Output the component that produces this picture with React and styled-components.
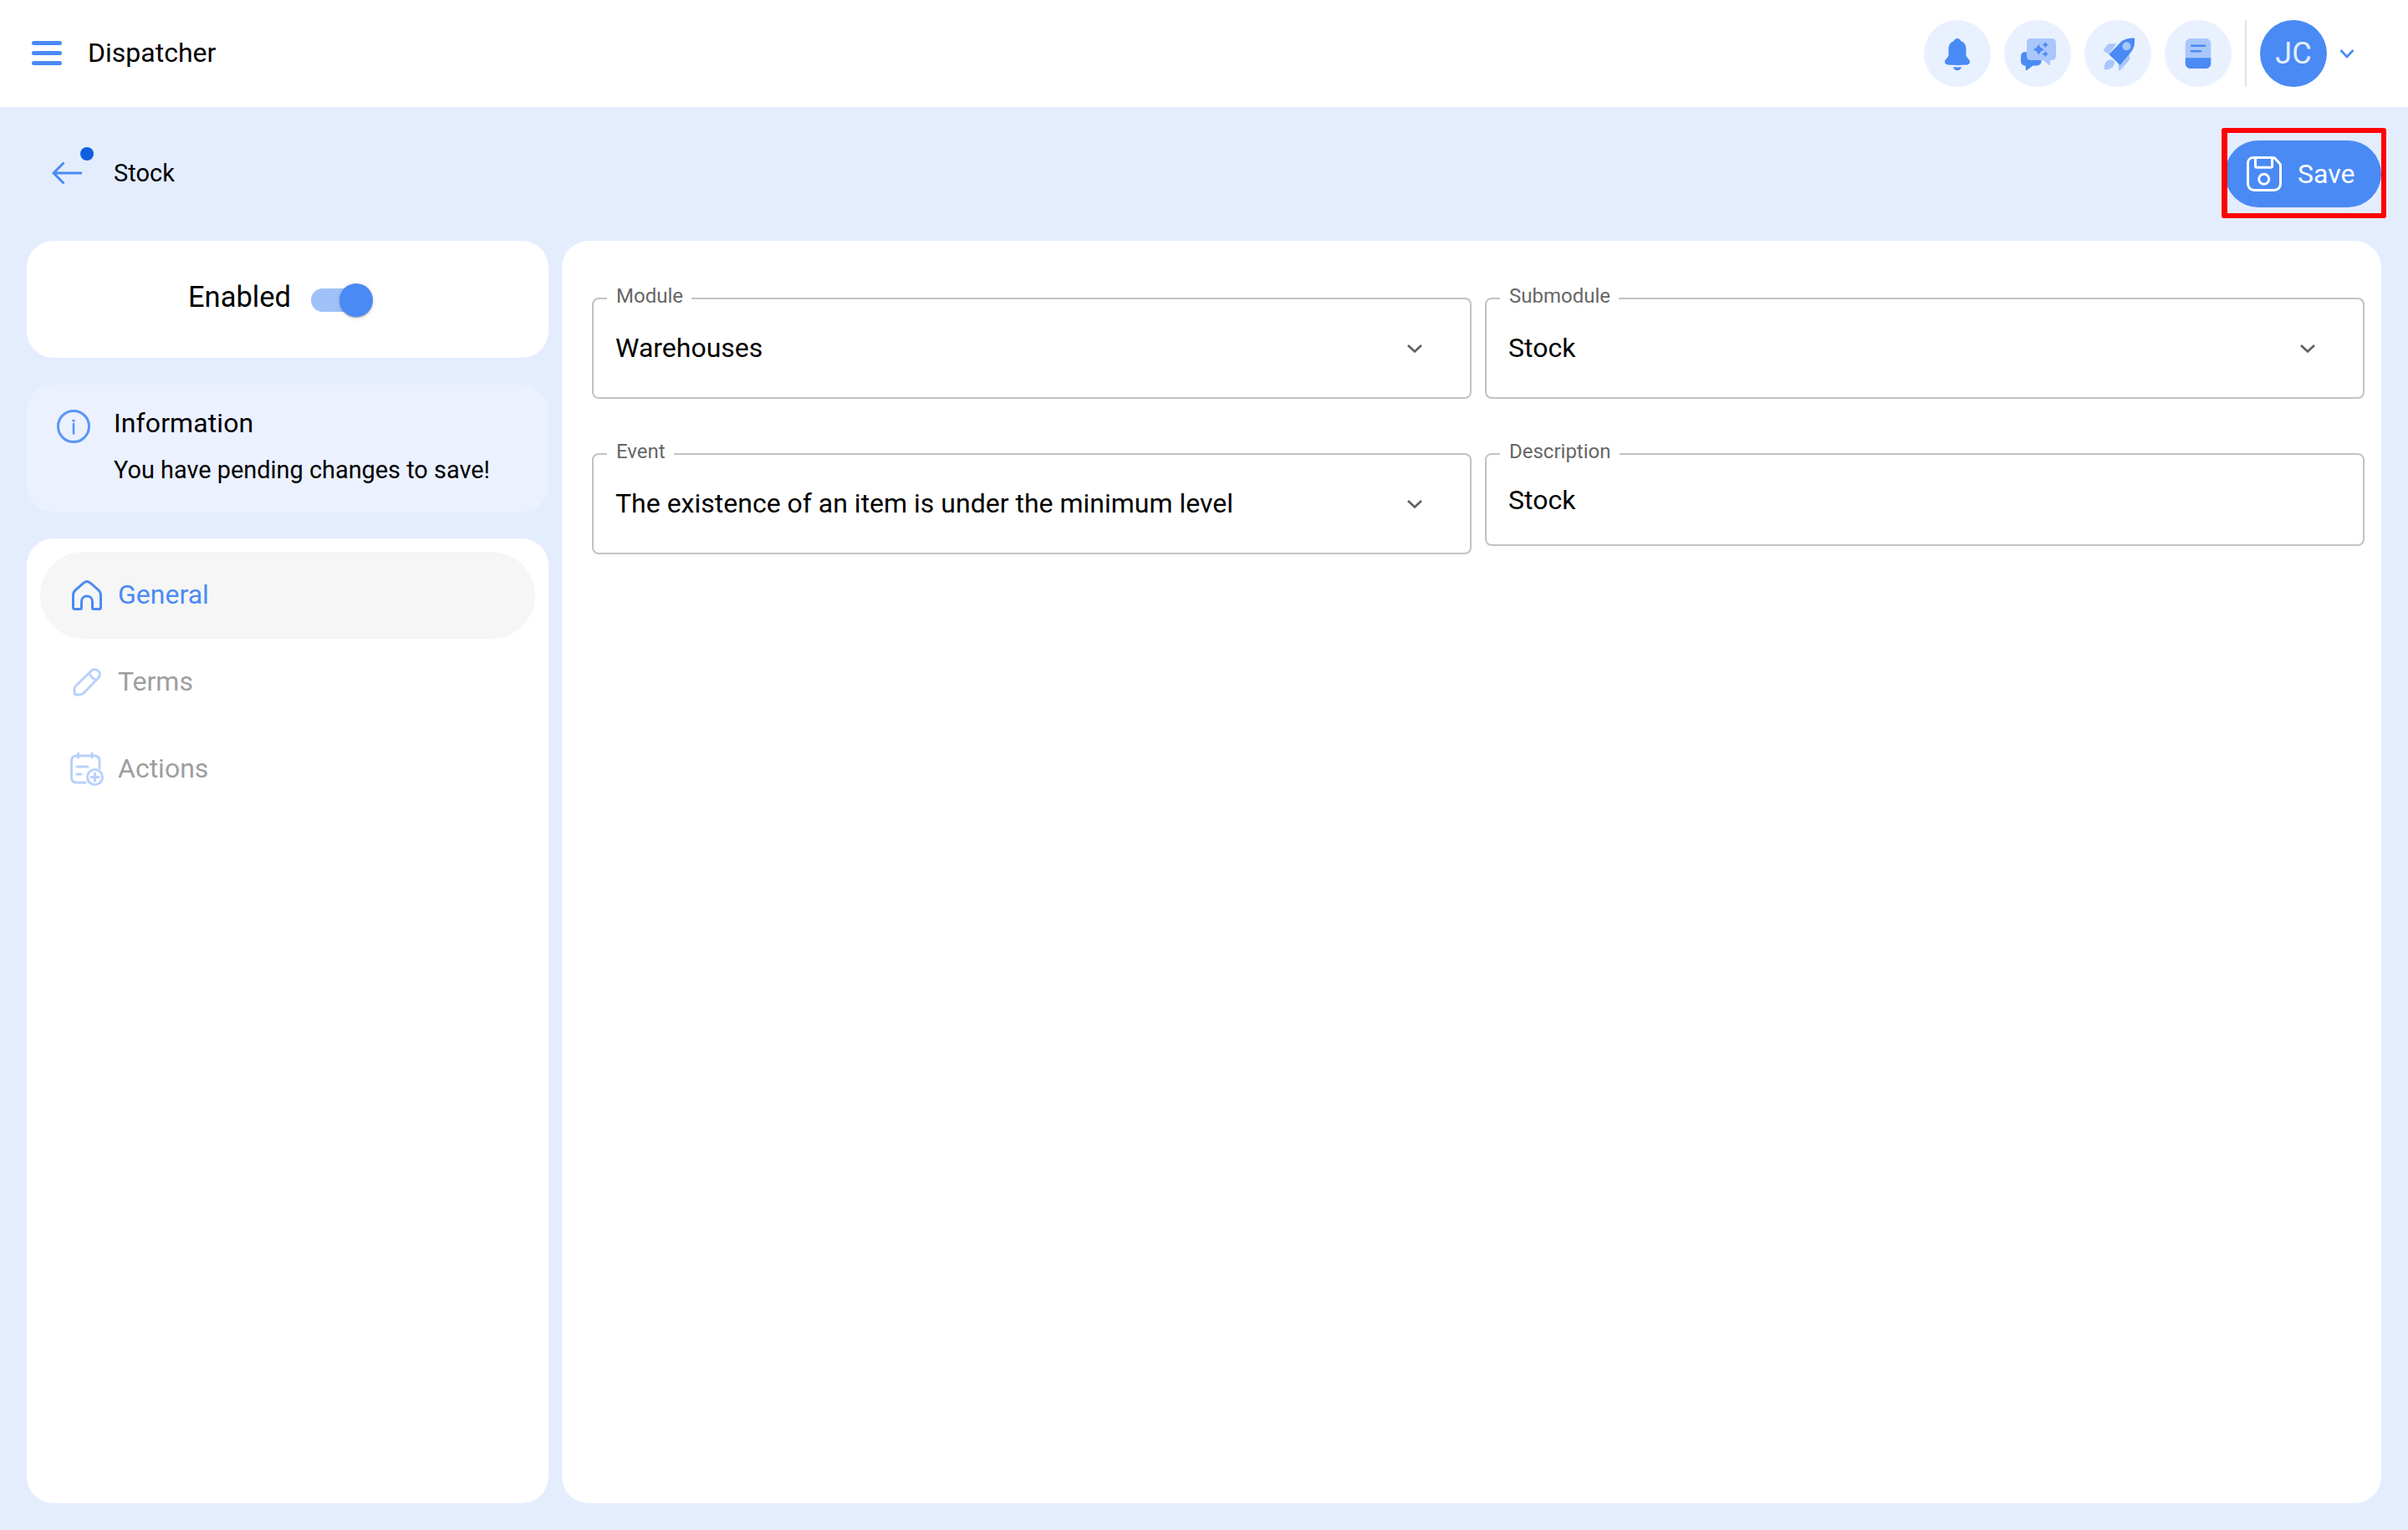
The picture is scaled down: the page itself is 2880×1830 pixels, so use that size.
import React from "react";
import styled, { createGlobalStyle } from "styled-components";

const blue = "#4a8af4";
const light = "#a9c7fb";
const pale = "#b8d1fb";
const Global = createGlobalStyle`
  html, body { margin: 0; padding: 0; background: #e3edfe; }
  body { font-family: Roboto, "Liberation Sans", sans-serif; color: #000; }
  * { box-sizing: border-box; }
`;
const Page = styled.div`
  width: 2880px; height: 1830px; display: flex; flex-direction: column; background: #e3edfe; overflow: hidden;
`;
const Header = styled.header`
  height: 128px; flex: none; background: #fff; display: flex; align-items: center; padding: 0 64px 0 38px;
`;
const Brand = styled.div`
  font-size: 32px; margin-left: 31px; flex: 1; line-height: 1; margin-top: -2px;
`;
const Toolbar = styled.div` display: flex; align-items: center; gap: 16px; `;
const RoundIcon = styled.div`
  width: 80px; height: 80px; border-radius: 50%; background: #eaf1fe; display: flex;
`;
const Divider = styled.div` width: 2px; height: 80px; background: #e2e2e2; `;
const Avatar = styled.div`
  width: 80px; height: 80px; border-radius: 50%; background: ${blue}; color: #e4edfe;
  display: flex; align-items: center; justify-content: center; font-size: 36px;
`;
const Chevron = styled.svg` width: 18px; height: 12px; margin-left: 15px; `;
const SubBar = styled.div`
  height: 160px; flex: none; display: flex; align-items: center; justify-content: space-between; padding: 0 32px 0 62px;
`;
const Back = styled.div` position: relative; display: flex; align-items: center; margin-top: -2px; `;
const Dot = styled.span`
  position: absolute; left: 34px; top: -15px; width: 16px; height: 16px; border-radius: 50%; background: #0f5fdf;
`;
const BackLabel = styled.div` font-size: 29px; margin-left: 37px; margin-top: -1px; `;
const SaveButton = styled.button`
  position: relative; width: 187px; height: 80px; border: 0; border-radius: 40px; background: ${blue}; color: #fff;
  display: flex; align-items: center; padding: 0 0 0 26px; font: 400 32px Roboto, sans-serif;
`;
const SaveLabel = styled.span` margin-left: 19px; margin-top: -1px; `;
const Highlight = styled.span`
  position: absolute; left: -4px; right: -6px; top: -15px; bottom: -13px; border: 6px solid #ff0000; border-left-width: 7px; border-radius: 3px;
`;
const Main = styled.main`
  flex: 1; min-height: 0; display: flex; gap: 16px; padding: 0 32px 32px;
`;
const Side = styled.aside`
  width: 624px; flex: none; display: flex; flex-direction: column; gap: 32px;
`;
const Card = styled.section`
  background: ${(p) => p.$bg || "#fff"}; border-radius: 32px;
`;
const EnabledCard = styled(Card)`
  height: 140px; display: flex; align-items: center; justify-content: center; gap: 24px; padding-right: 23px;
`;
const EnabledLabel = styled.span` font-size: 34.5px; margin-top: -7px; `;
const Switch = styled.span` position: relative; display: block; width: 68px; height: 28px; border-radius: 14px; background: #a1c2f9; margin-top: 2px; `;
const Thumb = styled.span`
  position: absolute; left: 34px; top: -6px; width: 40px; height: 40px; border-radius: 50%; background: ${blue};
  box-shadow: 0 2px 2px -1px rgba(0,0,0,.2), 0 1px 2px rgba(0,0,0,.14), 0 1px 6px rgba(0,0,0,.12);
`;
const InfoCard = styled(Card)`
  height: 152px; display: flex; padding: 28px 0 0 36px; gap: 28px;
`;
const InfoGlyph = styled.svg` width: 40px; height: 40px; flex: none; margin-top: 2px; `;
const InfoText = styled.div` display: flex; flex-direction: column; `;
const InfoTitle = styled.div` font-size: 32px; line-height: 36px; letter-spacing: 0.1px; `;
const InfoBody = styled.div` font-size: 28.9px; line-height: 36px; margin-top: 20px; `;
const NavCard = styled(Card)` flex: 1; padding: 16px; display: flex; flex-direction: column; `;
const NavItem = styled.div`
  height: 104px; border-radius: 52px; display: flex; align-items: center; padding-left: 36px; gap: 17px;
  background: ${(p) => (p.$active ? "#f6f6f6" : "transparent")};
  color: ${(p) => (p.$active ? blue : "#9e9e9e")}; font-size: 32px;
`;
const NavLabel = styled.span` margin-top: -3px; `;
const NavIcon = styled.svg` width: 40px; height: 40px; flex: none; `;
const Panel = styled(Card)`
  flex: 1; display: grid; grid-template-columns: 1fr 1fr; column-gap: 16px; row-gap: 65px; align-content: start;
  align-items: start; padding: 68px 20px 0 36px;
`;
const Field = styled.div`
  position: relative; height: ${(p) => p.$h}px; border: 2px solid #c2c2c2; border-radius: 8px; display: flex;
  align-items: ${(p) => (p.$top ? "flex-start" : "center")}; padding: ${(p) => (p.$top ? "37px" : "0")} 26px 0 26px; font-size: 32px;
`;
const FieldLabel = styled.label`
  position: absolute; left: 16px; top: -18px; padding: 0 10px 0 11px; background: #fff; font-size: 24px; line-height: 28px; color: #666;
`;
const FieldValue = styled.span` flex: 1; margin-top: -2px; `;
const Caret = styled.svg` width: 18px; height: 10px; margin-right: 31px; `;

const Bell = () => (
  <svg width="80" height="80" viewBox="0 0 80 80">
    <path fill={blue} d="M40 22c-2 0-3.400 1-4.200 3C31.500 26.500 29.500 30 29.500 35v6.500c0 3.500-4.500 5-4.500 8.800 0 2.200 2 3 4 3.200 7 .6 15 .6 22 0 2-.2 4-1 4-3.200 0-3.800-4.500-5.300-4.500-8.800V35c0-5-2-8.500-6.300-10-.8-2-2.200-3-4.200-3z" />
    <path fill={blue} d="M35 56c3.300.5 6.700.5 10 0-.8 2.800-2.600 4.200-5 4.200s-4.200-1.400-5-4.200z" />
  </svg>
);
const Star = ({ x, y, r, c }) => (
  <path fill={c} d={`M${x} ${y - r}Q${x + r * 0.2} ${y - r * 0.2} ${x + r} ${y}Q${x + r * 0.2} ${y + r * 0.2} ${x} ${y + r}Q${x - r * 0.2} ${y + r * 0.2} ${x - r} ${y}Q${x - r * 0.2} ${y - r * 0.2} ${x} ${y - r}z`} />
);
const Chat = () => (
  <svg width="80" height="80" viewBox="0 0 80 80">
    <path fill={blue} d="M25 38.500h14c3 0 5.500 2.500 5.500 5.500v5c0 3-2.500 5.500-5.500 5.500h-4.500L27 60c-.6.400-1.300 0-1.300-.7v-4.800H25c-3 0-5-2.500-5-5.500v-5.500c0-3 2-5.500 5-5.500z" />
    <path fill={light} d="M32 22h25c3 0 5 2 5 5v16c0 3-2 5-5 5h-2v5c0 1-.8 1.400-1.500.8L47 48H32c-3 0-5-2-5-5V27c0-3 2-5 5-5z" />
    <Star x={41.300} y={35.300} r={7} c={blue} />
    <Star x={49.300} y={29.700} r={3.600} c={blue} />
    <Star x={49.300} y={40.700} r={3.600} c={blue} />
  </svg>
);
const Rocket = () => (
  <svg width="80" height="80" viewBox="0 0 80 80">
    <path fill={light} d="M22.300 36.500l5.500-7.500c.5-.6 1-.8 1.800-.8h9L29 41z" />
    <path fill={light} d="M41 60l-.4-9.500L54 38v8.500c0 .7-.2 1.200-.7 1.800L43 60c-.7.700-1.800.6-2 0z" />
    <path fill={light} d="M24 59c-1-3.500.5-8.500 3.500-10.500 2.500-1.500 6.500-1 8 .5 1.300 1.500.5 5-1.500 7-2.500 2.500-6.500 3.500-10 3z" />
    <path fill={blue} d="M29.300 41L44 25.800C48 22.500 54 21.500 60 21.500c.5 6-.5 11.500-3.500 15.700L42.700 54z" />
    <circle cx="50.400" cy="31.300" r="5" fill={light} />
  </svg>
);
const Book = () => (
  <svg width="80" height="80" viewBox="0 0 80 80">
    <path fill={light} d="M30.700 22h18.600c3.300 0 6 2.700 6 6v18H24.700V28c0-3.300 2.700-6 6-6z" />
    <path fill={blue} d="M24.700 45.300h30.600V52c0 3.300-2.700 6-6 6H30.700c-3.300 0-6-2.700-6-6z" />
    <path stroke={blue} strokeWidth="2.600" strokeLinecap="round" fill="none" d="M32 30.800h16M32 37.300h11" />
  </svg>
);

const ChevronIcon = () => (
  <Chevron viewBox="0 0 18 12"><path d="M1.500 2l7.500 8 7.500-8" fill="none" stroke={blue} strokeWidth="2.600" /></Chevron>
);
const CaretIcon = () => (
  <Caret viewBox="0 0 18 10"><path d="M1 1l8 7.500L17 1" fill="none" stroke="#5f5f5f" strokeWidth="2.600" /></Caret>
);
const Select = ({ label, value, h = 121 }) => (
  <Field $h={h}>
    <FieldLabel>{label}</FieldLabel>
    <FieldValue>{value}</FieldValue>
    <CaretIcon />
  </Field>
);

export default function App() {
  return (
    <Page>
      <Global />
      <Header>
        <svg width="36" height="30" viewBox="0 0 36 30"><path d="M2.500 2.500h31M2.500 14.500h31M2.500 26.500h31" stroke={blue} strokeWidth="5" strokeLinecap="round" /></svg>
        <Brand>Dispatcher</Brand>
        <Toolbar>
          <RoundIcon><Bell /></RoundIcon>
          <RoundIcon><Chat /></RoundIcon>
          <RoundIcon><Rocket /></RoundIcon>
          <RoundIcon><Book /></RoundIcon>
          <Divider />
          <Avatar>JC</Avatar>
        </Toolbar>
        <ChevronIcon />
      </Header>
      <SubBar>
        <Back>
          <svg width="37" height="28" viewBox="0 0 37 28"><path d="M36 14H2M14.500 1.500L2 14l12.500 12.500" fill="none" stroke={blue} strokeWidth="3" /></svg>
          <Dot />
          <BackLabel>Stock</BackLabel>
        </Back>
        <SaveButton>
          <svg width="42" height="42" viewBox="0 0 42 42" fill="none" stroke="#fff" strokeWidth="3">
            <path d="M8 1.500h23.500c1 0 1.800.4 2.500 1l5.500 6c.7.700 1 1.500 1 2.500V33c0 4-3 7.500-7.500 7.500H9C4.500 40.500 1.500 37 1.500 33V8c0-4 3-6.500 6.500-6.500z" strokeLinejoin="round" />
            <path d="M10.500 2v10c0 .8.500 1.300 1.500 1.300h17c1 0 1.500-.5 1.500-1.300V2" />
            <circle cx="20.700" cy="27.300" r="6" />
          </svg>
          <SaveLabel>Save</SaveLabel>
          <Highlight />
        </SaveButton>
      </SubBar>
      <Main>
        <Side>
          <EnabledCard>
            <EnabledLabel>Enabled</EnabledLabel>
            <Switch><Thumb /></Switch>
          </EnabledCard>
          <InfoCard $bg="#ebf1fe">
            <InfoGlyph viewBox="0 0 40 40" fill="none" stroke="#5b96f6" strokeWidth="3">
              <circle cx="20" cy="20" r="18.500" />
              <path d="M20 17v11.500" strokeWidth="2.600" strokeLinecap="round" />
              <path d="M20 13v.2" strokeWidth="3.200" strokeLinecap="round" />
            </InfoGlyph>
            <InfoText>
              <InfoTitle>Information</InfoTitle>
              <InfoBody>You have pending changes to save!</InfoBody>
            </InfoText>
          </InfoCard>
          <NavCard>
            <NavItem $active>
              <NavIcon viewBox="0 0 40 40" fill="none" stroke={blue} strokeWidth="3" strokeLinejoin="round">
                <path d="M20 3.500c-1.800 0-3 .8-4.500 2.200L6 14c-2 1.800-2.500 3.500-2.500 6v14.500c0 1.300.8 2 2 2H12c1 0 1.500-.6 1.500-1.500V27.500c0-3.800 2.800-6.500 6.500-6.500s6.500 2.700 6.500 6.500V35c0 .9.500 1.500 1.500 1.500h6.500c1.200 0 2-.7 2-2V20c0-2.500-.5-4.200-2.500-6l-9.500-8.300C23 4.300 21.800 3.500 20 3.500z" />
              </NavIcon>
              <NavLabel>General</NavLabel>
            </NavItem>
            <NavItem>
              <NavIcon viewBox="0 0 40 40" fill="none" stroke={pale} strokeWidth="3" strokeLinejoin="round">
                <path d="M25 6.500c2.500-2.500 6-2.500 8.500 0s2.500 6 0 8.500L16 33c-1.500 1.500-3 2-5 2H8c-2 0-3-1-3-3v-3c0-2 .5-3.500 2-5z" />
                <path d="M23 8.500c1 4.500 4 7.500 8.500 8.500" />
              </NavIcon>
              <NavLabel>Terms</NavLabel>
            </NavItem>
            <NavItem>
              <NavIcon viewBox="0 0 40 40" fill="none" stroke={pale} strokeWidth="3" strokeLinecap="round">
                <path d="M18 36H7c-3 0-5.500-2.500-5.500-5.500V9.500C1.500 6.500 4 4 7 4h22.500c3 0 5.500 2.500 5.500 5.500V19" />
                <path d="M9.500 1v5M26 1v5M8 17h13M8 26h5" />
                <circle cx="29.500" cy="29.500" r="9" />
                <path d="M29.500 25v9M25 29.500h9" strokeWidth="3.200" />
              </NavIcon>
              <NavLabel>Actions</NavLabel>
            </NavItem>
          </NavCard>
        </Side>
        <Panel>
          <Select label="Module" value="Warehouses" />
          <Select label="Submodule" value="Stock" />
          <Select label="Event" value="The existence of an item is under the minimum level" />
          <Field $h={111} $top>
            <FieldLabel>Description</FieldLabel>
            <FieldValue>Stock</FieldValue>
          </Field>
        </Panel>
      </Main>
    </Page>
  );
}
